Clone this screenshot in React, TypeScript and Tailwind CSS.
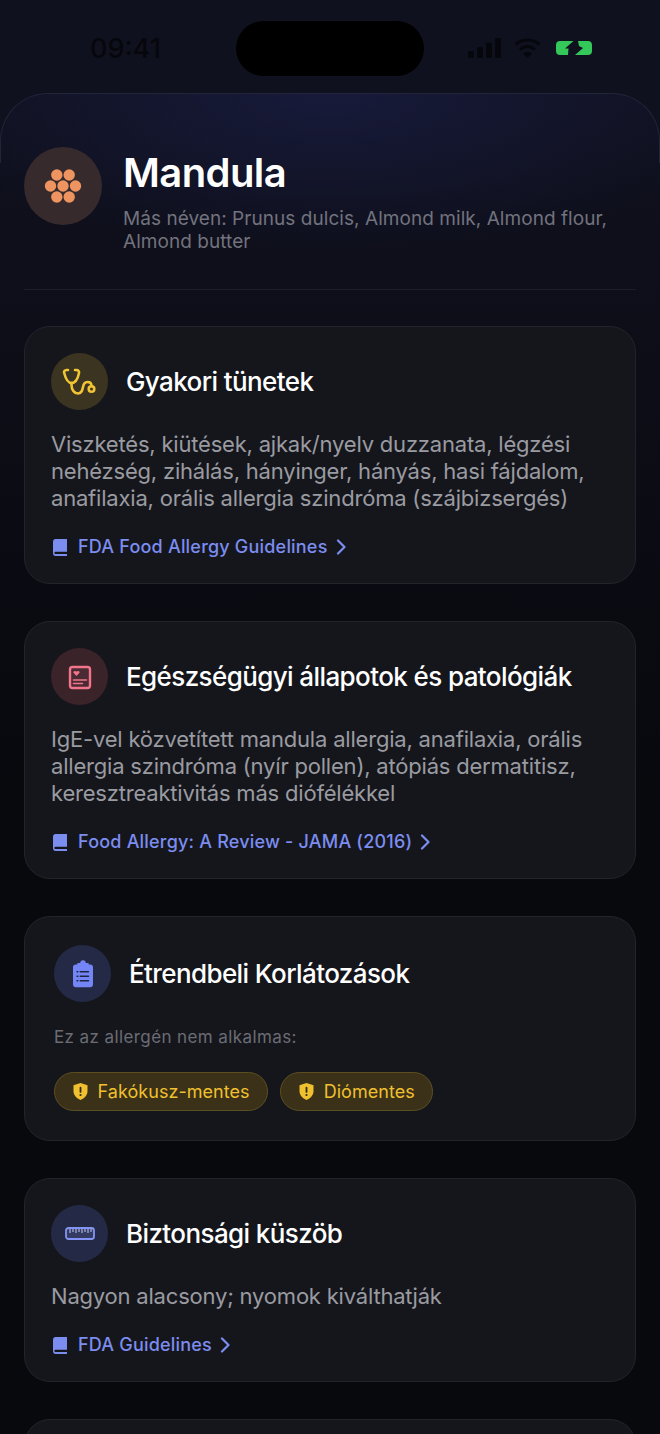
import React from "react";

const Book = () => (
  <svg width="14" height="17" viewBox="0 0 14 17" className="shrink-0 ml-[2px]">
    <path d="M2.500 0H14v12.800H2.800c-.9 0-1.400.5-1.400 1.100s.5 1.200 1.400 1.200H14V17H2.500C1 17 0 15.800 0 14.300V2.700C0 1.200 1 0 2.500 0z" fill="#7c8df0" />
  </svg>
);

const Chevron = () => (
  <svg width="10" height="16" viewBox="0 0 10 16" fill="none" stroke="#7c8df0" strokeWidth="2.200" strokeLinecap="round" strokeLinejoin="round" className="shrink-0 ml-[8px]">
    <path d="M2 1.500 8.500 8 2 14.500" />
  </svg>
);

const Stethoscope = () => (
  <svg width="44" height="44" viewBox="0 0 44 44" fill="none" stroke="#f0c435" strokeWidth="2.600" strokeLinecap="round" strokeLinejoin="round">
    <path d="M10 10H8.500C6.500 10 5.700 11.500 6.200 13 7.500 18 9.500 23 13.500 23 17.500 23 20 18 21 13 21.300 11.500 20.500 10 18.500 10H17" />
    <path d="M13.500 23V25C13.500 30 16.500 33.500 20 33.500 23.500 33.500 24.500 30 25 27 25.500 24 27 22 29.500 22 32 22 33.500 23.500 33.500 26" />
    <circle cx="33.500" cy="29" r="2.800" />
  </svg>
);

const HeartCard = () => (
  <svg width="34" height="34" viewBox="0 0 34 34" fill="none">
    <rect x="7" y="7" width="20" height="21" rx="2.500" fill="#4a2a33" stroke="#f0758a" strokeWidth="2.400" />
    <path d="M13.500 16 10.700 13.100c-1.200-1.500.9-3.100 2.800-1.500 1.900-1.600 4-0 2.800 1.500z" fill="#f0758a" />
    <path d="M10.500 20h13M10.500 23.500h9" stroke="#f0758a" strokeWidth="1.600" strokeLinecap="round" />
  </svg>
);

const Clipboard = () => (
  <svg width="20" height="29" viewBox="0 0 22 30">
    <path d="M8 3.500a3 3 0 0 1 6 0h2.500c.5 0 .8.300.8.800V5h1.700c1.700 0 3 1.200 3 2.800V27c0 1.700-1.300 3-3 3H3c-1.700 0-3-1.300-3-3V7.800C0 6.200 1.300 5 3 5h1.700v-.7c0-.5.300-.8.800-.8z" fill="#7486f5" />
    <path d="M8 13h9M8 18h9M8 23h9M4.500 13h.8M4.500 18h.8M4.500 23h.8" stroke="#1e2540" strokeWidth="1.700" strokeLinecap="round" />
  </svg>
);

const Ruler = () => (
  <svg width="30" height="13" viewBox="0 0 30 13" fill="none">
    <rect x="1" y="1" width="28" height="11" rx="2.500" fill="#343b63" stroke="#8494f5" strokeWidth="1.800" />
    <path d="M5 2v4M8 2v3M11 2v4M14 2v3M17 2v4M20 2v3M23 2v4M26 2v3" stroke="#c4ccf8" strokeWidth="1" />
  </svg>
);

const Shield = () => (
  <svg width="15" height="17" viewBox="0 0 15 17" className="shrink-0">
    <path d="M7.500 0 14.500 2.300V8c0 4.200-3 7.300-7 9-4-1.700-7-4.800-7-9V2.300z" fill="#f0c02f" />
    <rect x="6.600" y="3.800" width="1.800" height="6" rx=".9" fill="#2f2a15" />
    <circle cx="7.500" cy="12" r="1.100" fill="#2f2a15" />
  </svg>
);

const Almond = () => (
  <svg width="38" height="36" viewBox="0 0 38 36" fill="#ee9460">
    {[
      [12.800, 7],
      [25.200, 7],
      [6.500, 18],
      [19, 18],
      [31.500, 18],
      [12.800, 29],
      [25.200, 29],
    ].map(([cx, cy], i) => (
      <circle key={i} cx={cx} cy={cy} r="5.700" />
    ))}
  </svg>
);

const StatusBar = () => (
  <div className="h-[93px] relative shrink-0">
    <span className="absolute left-[90px] top-[33px] text-[27px] leading-[32px] font-medium text-[#06070c]">09:41</span>
    <div className="absolute left-[236px] top-[21px] w-[188px] h-[55px] rounded-full bg-black" />
    <svg className="absolute left-[468px] top-[38px]" width="33" height="20" viewBox="0 0 33 20" fill="#06070c">
      <rect x="0" y="13" width="6" height="7" rx="1.500" />
      <rect x="9" y="9" width="6" height="11" rx="1.500" />
      <rect x="18" y="4.500" width="6" height="15.500" rx="1.500" />
      <rect x="27" y="0" width="6" height="20" rx="1.500" />
    </svg>
    <svg className="absolute left-[514px] top-[38px]" width="27" height="20" viewBox="0 0 27 20" fill="none" stroke="#06070c" strokeWidth="3">
      <path d="M1.500 6.500c7-6 17-6 24 0" />
      <path d="M6 11.500c4.500-4 10.500-4 15 0" />
      <path d="M13.500 20l-4.500-4.500c2.500-2 6.500-2 9 0z" fill="#06070c" stroke="none" />
    </svg>
    <svg className="absolute left-[556px] top-[41px]" width="36" height="14" viewBox="0 0 36 14" fill="#34c759">
      <path d="M4 0H17.500L9 7.500H12.500L12 14H4C1.500 14 0 12.500 0 10V4C0 1.500 1.500 0 4 0Z" />
      <path d="M22 0H32C34.500 0 36 1.500 36 4V10C36 12.500 34.500 14 32 14H19L27 7 23 5Z" />
    </svg>
  </div>
);

const SourceLink = ({ label }: { label: string }) => (
  <div className="flex items-center mt-[23px] h-[24px]">
    <Book />
    <span className="ml-[11px] text-[18px] leading-[24px] font-medium tracking-[0.2px] text-[#7c8df0]">{label}</span>
    <Chevron />
  </div>
);

const IconCircle = ({ bg, children }: { bg: string; children: React.ReactNode }) => (
  <div className={`w-[57px] h-[57px] rounded-full flex items-center justify-center shrink-0 ${bg}`}>{children}</div>
);

const Card = ({ className, children }: { className: string; children: React.ReactNode }) => (
  <div className={`rounded-[26px] bg-[#15161c] border border-[#22242c] ${className}`}>{children}</div>
);

const Section = ({ icon, title, text, source }: { icon: React.ReactNode; title: string; text: string; source: string }) => (
  <Card className="px-[26px] pt-[26px] pb-[24px]">
    <div className="flex items-center gap-[18px]">
      {icon}
      <h2 className="text-[26px] leading-[32px] font-medium tracking-[-0.6px] text-white">{title}</h2>
    </div>
    <p className="mt-[21px] text-[22px] leading-[27px] tracking-[-0.2px] text-[#9a9ba1]">{text}</p>
    <SourceLink label={source} />
  </Card>
);

const Tag = ({ label }: { label: string }) => (
  <div className="flex items-center h-[39px] px-[17.5px] rounded-full bg-[#3a3118] border border-[#5c4f22]">
    <Shield />
    <span className="ml-[10px] text-[18px] tracking-[0.05px] text-[#f0c02f]">{label}</span>
  </div>
);

export default function App() {
  return (
    <div className="h-[1434px] overflow-hidden flex flex-col bg-[#10111e] font-['Inter',sans-serif]">
      <StatusBar />
      <div className="relative flex-1 rounded-t-[48px] bg-[radial-gradient(ellipse_420px_160px_at_50%_0,#171a3a,transparent),linear-gradient(#10111f,#0c0d16_300px,#08090d_700px)] px-[24px]">
        {/* only the top corners carry the hairline */}
        <div className="absolute inset-x-0 top-0 h-[70px] rounded-t-[48px] border-t border-x border-[#22243a] pointer-events-none" />
        {/* header */}
        <div className="flex pt-[54px] pb-[36px] border-b border-[#1d1e2c]">
          <div className="w-[78px] h-[78px] rounded-full bg-[#362a2c] flex items-center justify-center shrink-0">
            <Almond />
          </div>
          <div className="ml-[21px] mt-[2px]">
            <h1 className="text-[40px] leading-[48px] font-semibold tracking-[-0.6px] text-white">Mandula</h1>
            <p className="mt-[10px] text-[19px] leading-[23px] tracking-[0.05px] text-[#72737e]">
              Más néven: Prunus dulcis, Almond milk, Almond flour, Almond butter
            </p>
          </div>
        </div>

        <div className="mt-[36px] flex flex-col gap-[37px]">
          <Section
            icon={<IconCircle bg="bg-[#3b3420]"><Stethoscope /></IconCircle>}
            title="Gyakori tünetek"
            text="Viszketés, kiütések, ajkak/nyelv duzzanata, légzési nehézség, zihálás, hányinger, hányás, hasi fájdalom, anafilaxia, orális allergia szindróma (szájbizsergés)"
            source="FDA Food Allergy Guidelines"
          />
          <Section
            icon={<IconCircle bg="bg-[#3a2329]"><HeartCard /></IconCircle>}
            title="Egészségügyi állapotok és patológiák"
            text="IgE-vel közvetített mandula allergia, anafilaxia, orális allergia szindróma (nyír pollen), atópiás dermatitisz, keresztreaktivitás más diófélékkel"
            source="Food Allergy: A Review - JAMA (2016)"
          />
          <Card className="px-[29px] pt-[28px] pb-[29px]">
            <div className="flex items-center gap-[18px]">
              <IconCircle bg="bg-[#242a45]"><Clipboard /></IconCircle>
              <h2 className="text-[26px] leading-[32px] font-medium tracking-[-0.6px] text-white">Étrendbeli Korlátozások</h2>
            </div>
            <p className="mt-[24px] text-[17px] leading-[22px] tracking-[0.4px] text-[#6b6c74]">Ez az allergén nem alkalmas:</p>
            <div className="mt-[24px] flex gap-[12px]">
              <Tag label="Fakókusz-mentes" />
              <Tag label="Diómentes" />
            </div>
          </Card>
          <Section
            icon={<IconCircle bg="bg-[#242a45]"><Ruler /></IconCircle>}
            title="Biztonsági küszöb"
            text="Nagyon alacsony; nyomok kiválthatják"
            source="FDA Guidelines"
          />
          <Card className="h-[200px]">
            <span />
          </Card>
        </div>
      </div>
    </div>
  );
}
